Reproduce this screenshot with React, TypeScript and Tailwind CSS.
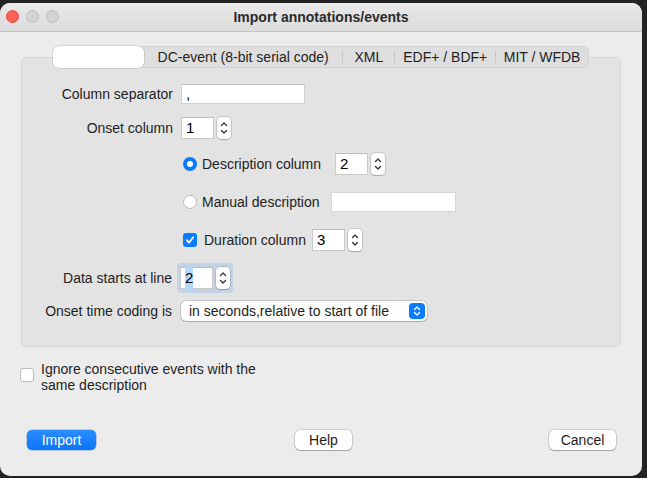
const font = { fontFamily: '"Liberation Sans", Arial, sans-serif' };

function Stepper() {
  return (
    <div className="flex h-[22px] w-[14px] flex-col items-center justify-center rounded-[4px] bg-white shadow-[0_0_0_0.5px_rgba(0,0,0,0.25),0_1px_1px_rgba(0,0,0,0.15)]">
      <svg width="8" height="18" viewBox="0 0 8 18" fill="none" stroke="#333" strokeWidth="1.3" strokeLinecap="round" strokeLinejoin="round">
        <path d="M1.5 6.5 L4 4 L6.5 6.5" />
        <path d="M1.5 11.5 L4 14 L6.5 11.5" />
      </svg>
    </div>
  );
}

function SpinBox({ value, selected = false }: { value: string; selected?: boolean }) {
  return (
    <div className="flex items-center gap-[3px]">
      <div className="flex h-[22px] w-[33px] items-center border border-[#c9c9c9] border-t-[#bdbdbd] bg-white pl-[4px] text-[15px] text-black">
        <span className={selected ? 'bg-[#b3d7ff]' : ''}>{value}</span>
      </div>
      <Stepper />
    </div>
  );
}

function Radio({ on }: { on: boolean }) {
  return on ? (
    <div className="flex h-[14px] w-[14px] items-center justify-center rounded-full bg-[#0a7aff]">
      <div className="h-[6px] w-[6px] rounded-full bg-white" />
    </div>
  ) : (
    <div className="h-[14px] w-[14px] rounded-full border border-[#b9b9b9] bg-white" />
  );
}

export default function App() {
  return (
    <div className="h-[478px] w-[647px] overflow-hidden bg-[#232323] pt-[3px]" style={font}>
      <div className="flex h-[473px] w-[642px] flex-col overflow-hidden rounded-[10px] bg-[#ececec] text-[14px] text-[#1e1e1e]">
        {/* title bar */}
        <div className="relative flex h-[29px] shrink-0 items-center justify-center border-b border-[#c4c4c4] bg-gradient-to-b from-[#e9e9e9] to-[#dcdcdc]">
          <div className="absolute left-[6px] top-[7px] flex gap-[7px]">
            <div className="h-[13px] w-[13px] rounded-full border border-[#e14942] bg-[#fe5f57]" />
            <div className="h-[13px] w-[13px] rounded-full border border-[#bdbdbd] bg-[#d3d3d3]" />
            <div className="h-[13px] w-[13px] rounded-full border border-[#bdbdbd] bg-[#d3d3d3]" />
          </div>
          <span className="text-[14px] font-bold text-[#2a2a2a]">Import annotations/events</span>
        </div>

        {/* tab widget */}
        <div className="mx-[21px] mt-[14px] flex flex-col">
          <div className="relative z-10 -mb-[11px] ml-[32px] flex h-[22px] w-[536px] items-center rounded-[6px] border border-[#d2d2d2] bg-[#dedede] text-[14px] text-[#1e1e1e]">
            <div className="-ml-px h-[22px] w-[91px] rounded-[6px] bg-white shadow-[0_0_0_0.5px_rgba(0,0,0,0.2)]" />
            <span className="w-[199px] text-center">DC-event (8-bit serial code)</span>
            <span className="h-[12px] w-px bg-[#c4c4c4]" />
            <span className="w-[51px] text-center">XML</span>
            <span className="h-[12px] w-px bg-[#c4c4c4]" />
            <span className="w-[100px] text-center">EDF+ / BDF+</span>
            <span className="h-[12px] w-px bg-[#c4c4c4]" />
            <span className="w-[92px] text-center">MIT / WFDB</span>
          </div>
          <div className="flex h-[290px] flex-col rounded-[5px] border border-[#d6d6d6] bg-[#e3e3e3] pt-[26px]">
            {/* column separator */}
            <div className="flex h-[20px] items-center">
              <div className="w-[151px] text-right">Column separator</div>
              <div className="ml-[8px] flex h-[20px] w-[124px] items-center border border-[#cfcfcf] border-t-[#c2c2c2] bg-white pl-[4px] text-[15px] text-black">,</div>
            </div>
            {/* onset column */}
            <div className="mt-[13px] flex h-[22px] items-center">
              <div className="w-[151px] text-right">Onset column</div>
              <div className="ml-[8px]">
                <SpinBox value="1" />
              </div>
            </div>
            {/* description column */}
            <div className="mt-[14px] flex h-[22px] items-center pl-[161px]">
              <Radio on />
              <span className="ml-[5px] w-[133px]">Description column</span>
              <SpinBox value="2" />
            </div>
            {/* manual description */}
            <div className="mt-[16px] flex h-[22px] items-center pl-[161px]">
              <Radio on={false} />
              <span className="ml-[5px] w-[129px]">Manual description</span>
              <div className="h-[20px] w-[125px] border border-[#d6d6d6] bg-white" />
            </div>
            {/* duration column */}
            <div className="mt-[16px] flex h-[22px] items-center pl-[161px]">
              <div className="flex h-[14px] w-[14px] items-center justify-center rounded-[3px] bg-[#0a7aff]">
                <svg width="10" height="10" viewBox="0 0 10 10" fill="none" stroke="white" strokeWidth="1.8" strokeLinecap="round" strokeLinejoin="round">
                  <path d="M1.8 5.2 L4 7.6 L8.2 2.2" />
                </svg>
              </div>
              <span className="ml-[7px] w-[108px]">Duration column</span>
              <SpinBox value="3" />
            </div>
            {/* data starts at line */}
            <div className="mt-[12px] flex h-[30px] items-center">
              <div className="w-[150px] text-right">Data starts at line</div>
              <div className="ml-[5px] flex h-[30px] items-center rounded-[4px] bg-[#c3d3e6] px-[3px]">
                <SpinBox value="2" selected />
              </div>
            </div>
            {/* onset time coding */}
            <div className="mt-[8px] flex h-[20px] items-center">
              <div className="w-[150px] text-right">Onset time coding is</div>
              <div className="ml-[9px] flex h-[20px] w-[246px] items-center justify-between rounded-[5px] bg-white pl-[8px] pr-[2px] text-[#1e1e1e] shadow-[0_0_0_0.5px_rgba(0,0,0,0.25),0_1px_1px_rgba(0,0,0,0.15)]">
                <span>in seconds,relative to start of file</span>
                <div className="flex h-[16px] w-[16px] items-center justify-center rounded-[4px] bg-[#0a7aff]">
                  <svg width="8" height="12" viewBox="0 0 8 12" fill="none" stroke="white" strokeWidth="1.4" strokeLinecap="round" strokeLinejoin="round">
                    <path d="M1.5 4.5 L4 2 L6.5 4.5" />
                    <path d="M1.5 7.5 L4 10 L6.5 7.5" />
                  </svg>
                </div>
              </div>
            </div>
          </div>
        </div>

        {/* ignore consecutive */}
        <div className="mt-[14px] flex items-start pl-[20px]">
          <div className="mt-[7px] h-[14px] w-[14px] rounded-[3px] border border-[#bdbdbd] bg-white" />
          <div className="ml-[7px] leading-[16px]">
            Ignore consecutive events with the
            <br />
            same description
          </div>
        </div>

        {/* buttons */}
        <div className="mt-[37px] flex items-center pl-[27px]">
          <button className="h-[20px] w-[69px] rounded-[5px] bg-gradient-to-b from-[#2a8cff] to-[#0a74f8] text-white shadow-[0_0_0_0.5px_rgba(0,90,200,0.5)]">Import</button>
          <button className="ml-[199px] h-[20px] w-[57px] rounded-[5px] bg-white text-[#1e1e1e] shadow-[0_0_0_0.5px_rgba(0,0,0,0.25),0_1px_1px_rgba(0,0,0,0.2)]">Help</button>
          <button className="ml-[197px] h-[20px] w-[67px] rounded-[5px] bg-white text-[#1e1e1e] shadow-[0_0_0_0.5px_rgba(0,0,0,0.25),0_1px_1px_rgba(0,0,0,0.2)]">Cancel</button>
        </div>
      </div>
    </div>
  );
}
